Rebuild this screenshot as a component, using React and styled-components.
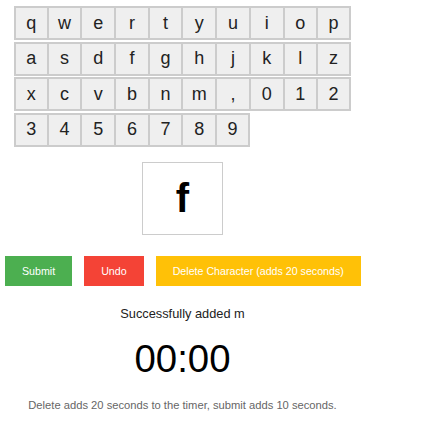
import React from "react";
import styled, { createGlobalStyle } from "styled-components";

const Global = createGlobalStyle`
  html, body { margin: 0; padding: 0; background: #fff; }
  body { font-family: "Liberation Sans", Arial, sans-serif; }
`;

const Wrapper = styled.div`
  width: 355px;
  margin-left: 5px;
  padding-top: 6px;
  display: flex;
  flex-direction: column;
  align-items: center;
`;

const Keyboard = styled.div`
  width: 337px;
  display: flex;
  flex-direction: column;
  gap: 1.6px;
`;

const Row = styled.div`
  display: flex;
  align-self: flex-start;
`;

const Key = styled.div`
  width: 33.7px;
  height: 34px;
  box-sizing: border-box;
  border: 1px solid #cccccc;
  background: #efefef;
  display: flex;
  align-items: center;
  justify-content: center;
  font-size: 18px;
  color: #222;
  border-left-width: ${(p) => (p.$first ? "2px" : "1px")};
  border-right-width: ${(p) => (p.$last ? "2px" : "1px")};
  border-top-width: 2px;
  border-bottom-width: 2px;
`;

const Current = styled.div`
  margin-top: 15px;
  width: 81px;
  height: 73px;
  box-sizing: border-box;
  border: 1px solid #cccccc;
  display: flex;
  align-items: center;
  justify-content: center;
  font-size: 40px;
  font-weight: bold;
  color: #000;
`;

const Buttons = styled.div`
  margin-top: 21px;
  display: flex;
  gap: 12px;
  align-self: stretch;
`;

const Button = styled.button`
  height: 30px;
  border: none;
  padding: 0 17px;
  font-family: "Liberation Sans", Arial, sans-serif;
  font-size: 10.67px;
  color: #fff;
  background: ${(p) => p.$bg};
  cursor: pointer;
  white-space: nowrap;
`;

const Message = styled.div`
  margin-top: 20px;
  font-size: 12.8px;
  color: #222;
`;

const Timer = styled.div`
  margin-top: 16px;
  font-size: 38.4px;
  color: #000;
`;

const Note = styled.div`
  margin-top: 18px;
  font-size: 11.2px;
  color: #666;
`;

const rows = [
  ["q", "w", "e", "r", "t", "y", "u", "i", "o", "p"],
  ["a", "s", "d", "f", "g", "h", "j", "k", "l", "z"],
  ["x", "c", "v", "b", "n", "m", ",", "0", "1", "2"],
  ["3", "4", "5", "6", "7", "8", "9"],
];

export default function App() {
  return (
    <>
      <Global />
      <Wrapper>
        <Keyboard>
          {rows.map((r, i) => (
            <Row key={i}>
              {r.map((k, j) => (
                <Key key={k} $first={j === 0} $last={j === r.length - 1}>
                  {k}
                </Key>
              ))}
            </Row>
          ))}
        </Keyboard>
        <Current>f</Current>
        <Buttons>
          <Button $bg="#4caf50">Submit</Button>
          <Button $bg="#f44336">Undo</Button>
          <Button $bg="#ffc107">Delete Character (adds 20 seconds)</Button>
        </Buttons>
        <Message>Successfully added m</Message>
        <Timer>00:00</Timer>
        <Note>Delete adds 20 seconds to the timer, submit adds 10 seconds.</Note>
      </Wrapper>
    </>
  );
}
